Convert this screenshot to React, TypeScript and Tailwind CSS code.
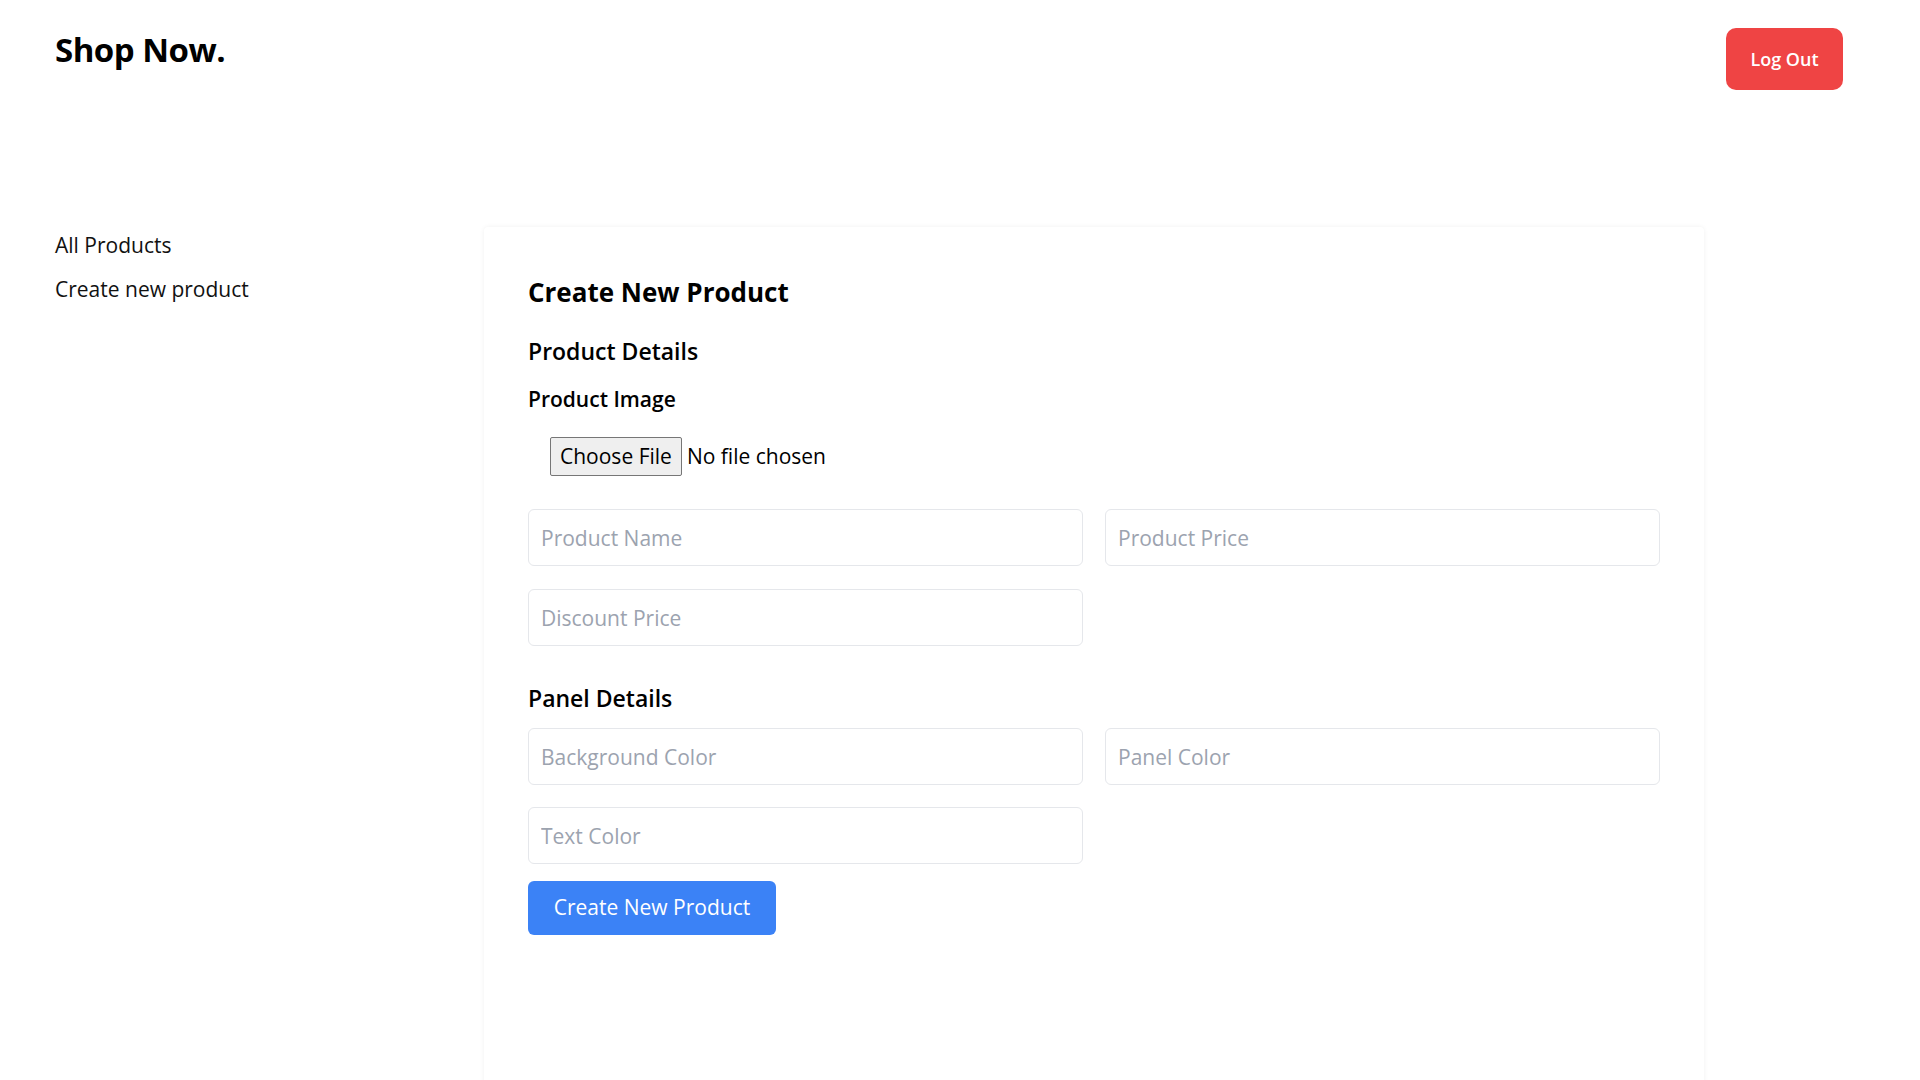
import { useState } from "react";

const productFields = ["Product Name", "Product Price", "Discount Price"];
const panelFields = ["Background Color", "Panel Color", "Text Color"];

const Field = ({ placeholder }: { placeholder: string }) => {
  return (
    <input
      type="text"
      placeholder={placeholder}
      className="h-[57px] w-full rounded-md border border-[#e5e7eb] bg-white px-3 text-[21px] text-black outline-none placeholder:text-[#9ca3af]"
    />
  );
};

const App = () => {
  const [fileName, setFileName] = useState<string>("");

  return (
    <div className="min-h-[1440px] bg-white font-['Open_Sans',sans-serif] text-black">
      <header className="flex items-start justify-between pl-[55px] pr-[77px] pt-[28px]">
        <h1 className="mt-[2px] text-[33px] leading-[40px] font-bold tracking-[-0.5px]">
          Shop Now.
        </h1>
        <button className="h-[62px] w-[117px] rounded-[10px] bg-[#ef4444] text-[18px] font-semibold text-white">
          Log Out
        </button>
      </header>

      <div className="mt-[137px] flex">
        <nav className="flex w-[484px] shrink-0 flex-col gap-[16px] pl-[55px] text-[21px] leading-[28px] text-[#111]">
          <a href="#" className="mt-[4px]">
            All Products
          </a>
          <a href="#">Create new product</a>
        </nav>

        <main className="h-[1190px] w-[1220px] rounded-sm bg-white px-[44px] pt-[47px] shadow-[0_0_5px_rgba(0,0,0,0.06)]">
          <h2 className="text-[26px] leading-[36px] font-bold">Create New Product</h2>

          <h3 className="mt-[25px] text-[23px] leading-[32px] font-semibold">Product Details</h3>
          <h4 className="mt-[18px] text-[21px] leading-[28px] font-semibold">Product Image</h4>

          <label className="mt-[24px] ml-[22px] flex h-[39px] w-fit cursor-pointer items-center text-[21px]">
            <span className="flex h-[39px] items-center rounded-[2px] border border-[#767676] bg-[#efefef] px-[9px]">
              Choose File
            </span>
            <span className="ml-[5px]">{fileName || "No file chosen"}</span>
            <input
              type="file"
              className="hidden"
              onChange={(e) => setFileName(e.target.files?.[0]?.name ?? "")}
            />
          </label>

          <div className="mt-[33px] grid grid-cols-2 gap-x-[22px] gap-y-[23px]">
            {productFields.map((f) => (
              <Field key={f} placeholder={f} />
            ))}
          </div>

          <h3 className="mt-[36px] text-[23px] leading-[32px] font-semibold">Panel Details</h3>

          <div className="mt-[14px] grid grid-cols-2 gap-x-[22px] gap-y-[22px]">
            {panelFields.map((f) => (
              <Field key={f} placeholder={f} />
            ))}
          </div>

          <button className="mt-[17px] h-[54px] w-[248px] rounded-md bg-[#3b82f6] text-[21px] text-white">
            Create New Product
          </button>
        </main>
      </div>
    </div>
  );
};

export default App;
